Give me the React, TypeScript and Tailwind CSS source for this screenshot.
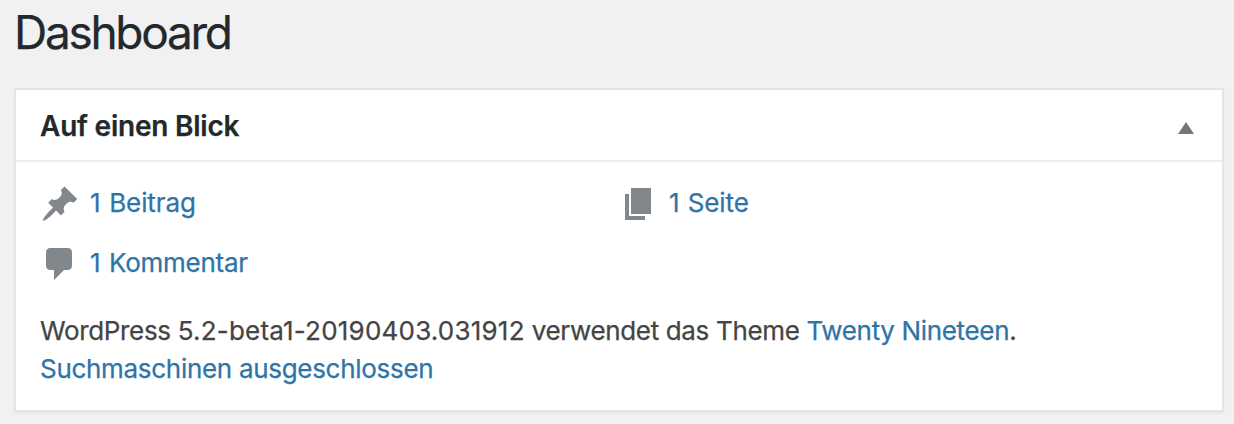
export default function App() {
  const link = 'text-[#2e74a8]';
  return (
    <main className="h-[424px] overflow-hidden bg-[#f1f1f1] px-[14px] font-['Inter',sans-serif] text-[26px] text-[#444] [-webkit-text-stroke:0.25px_currentColor]">
      <h1 className="h-[88px] pt-[3px] text-[46px] leading-[58px] tracking-[-2.3px] text-[#23282d]">Dashboard</h1>
      <section className="h-[324px] w-[1210px] border-2 border-[#e4e4e4] bg-white shadow-[0_2px_2px_rgba(0,0,0,0.04)]">
        <header className="flex h-[72px] items-center justify-between border-b-2 border-[#eee] pl-[24px] pr-[28px]">
          <h2 className="mt-[2px] text-[28px] font-semibold tracking-[-0.22px] text-[#23282d]">Auf einen Blick</h2>
          <svg className="mt-[6px] h-[12px] w-[16px]" viewBox="0 0 16 12" fill="#72777c"><path d="M8 0 16 12H0Z" /></svg>
        </header>
        <div className="px-[24px] pt-[22px]">
          <ul className="grid grid-cols-2">
            <li className="flex h-[38px] items-center">
              <svg className="mr-[10px] mt-[2px] size-[40px] shrink-0" viewBox="0 0 20 20" fill="#82878c"><path d="M10.44 3.02l1.82-1.82 6.36 6.35-1.83 1.82c-1.05-.68-2.48-.57-3.41.36l-.75.75c-.92.93-1.04 2.35-.35 3.41l-1.83 1.82-2.41-2.41-2.8 2.79c-.42.42-3.38 2.71-3.8 2.29s1.86-3.39 2.28-3.81l2.79-2.79L4.1 9.36l1.83-1.82c1.05.69 2.48.57 3.4-.36l.75-.75c.93-.92 1.05-2.35.36-3.41z" /></svg>
              <a className={`${link} -mt-[2px] tracking-[-0.1px] [word-spacing:1.5px]`}>1 Beitrag</a>
            </li>
            <li className="flex h-[38px] items-center">
              <svg className="mr-[10px] mt-[2px] size-[40px] shrink-0" viewBox="0 0 20 20" fill="#82878c"><path d="M6 15V2h10v13H6zm-1 1h8v2H3V5h2v11z" /></svg>
              <a className={`${link} -mt-[2px] tracking-[-0.1px] [word-spacing:1px]`}>1 Seite</a>
            </li>
            <li className="mt-[22px] flex h-[38px] items-center">
              <svg className="mr-[10px] mt-[2px] size-[40px] shrink-0" viewBox="0 0 20 20" fill="#82878c"><path d="M5 2h9c1.1 0 2 .9 2 2v7c0 1.1-.9 2-2 2h-2l-5 5v-5H5c-1.1 0-2-.9-2-2V4c0-1.1.9-2 2-2z" /></svg>
              <a className={`${link} -mt-[2px] tracking-[-0.25px] [word-spacing:1.6px]`}>1 Kommentar</a>
            </li>
          </ul>
          <p className="mt-[30px] whitespace-nowrap leading-[38px] tracking-[-0.34px]">WordPress <span className="tracking-[0.21px]">5.2-beta1-20190403.031912</span> verwendet das Theme <a className={link}>Twenty Nineteen</a>.</p>
          <p className="leading-[38px] tracking-[-0.3px]"><a className={link}>Suchmaschinen ausgeschlossen</a></p>
        </div>
      </section>
    </main>
  );
}
